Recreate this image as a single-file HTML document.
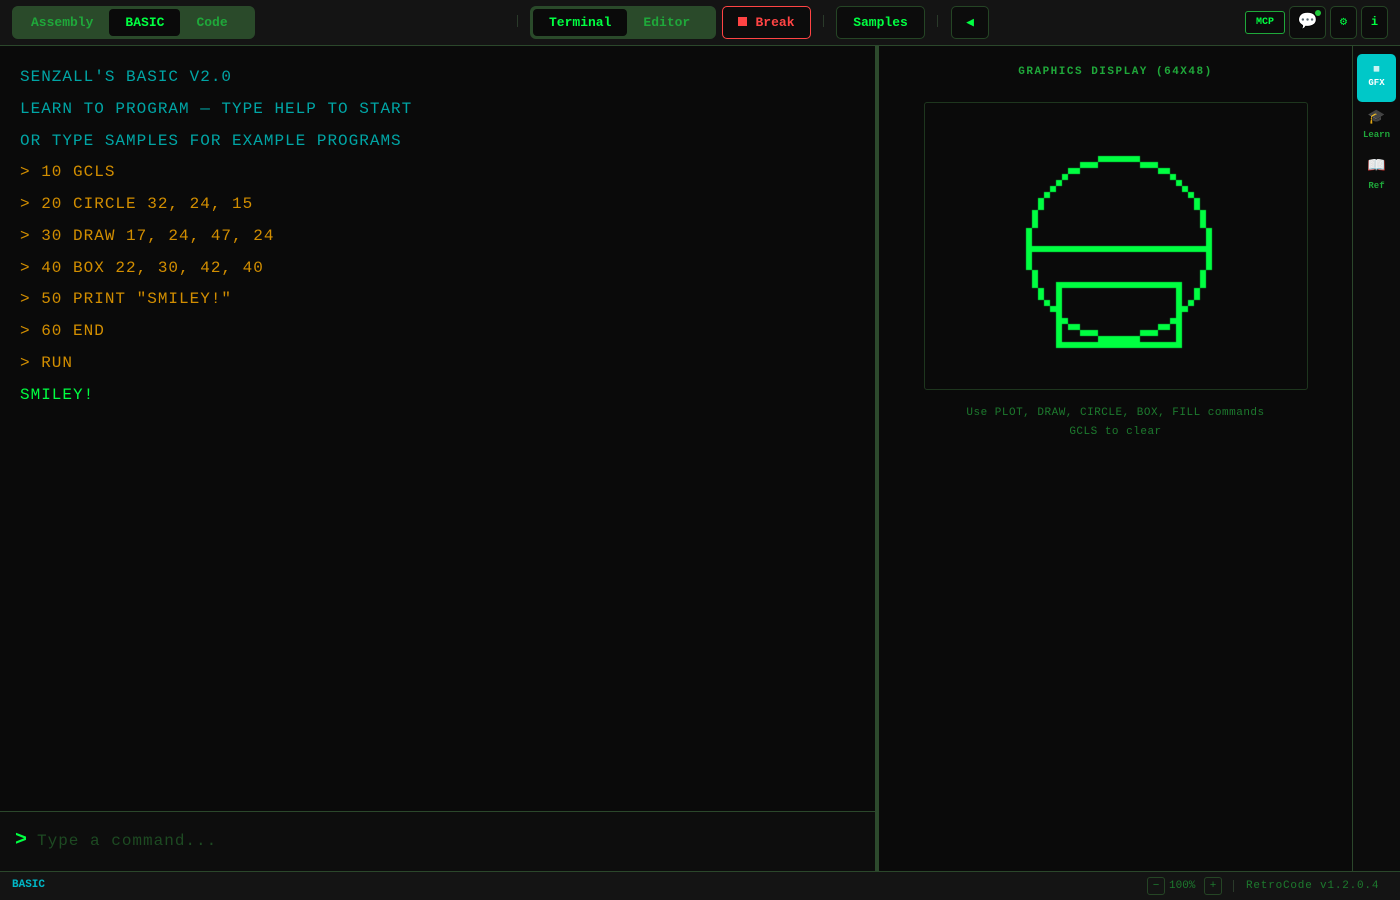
<!DOCTYPE html>
<html><head><meta charset="utf-8"><style>
*{box-sizing:border-box;margin:0;padding:0}
body{width:1400px;height:900px;background:#0a0a0a;font-family:"Courier New","Nimbus Mono PS","Nimbus Mono L",Courier,"Liberation Mono",monospace;overflow:hidden;position:relative}
.hdr{position:absolute;left:0;top:0;width:1400px;height:46px;background:#141414;border-bottom:1px solid #2b472b}
.grp{position:absolute;top:6px;height:33px;background:#2a4a2a;border-radius:6px;display:flex;padding:2px;border:1px solid #2a4a2a}
.grp div{padding:0 16px;line-height:27px;font-size:13px;font-weight:bold;color:#1fa83a;border-radius:4px}
.grp div.on{background:#0a0a0a;color:#00ff41}
.btn{position:absolute;top:6px;height:33px;border:1px solid #254525;border-radius:5px;background:#0c0c0c;color:#00ff41;font-size:13px;font-weight:bold;text-align:center;line-height:31px}
.sep{position:absolute;top:15px;width:1px;height:12px;background:#2a3a2a}
.t{position:absolute;left:20px;font-size:16px;letter-spacing:1px;white-space:pre}
.c{color:#00a5a5}.o{color:#d28e00}.g{color:#00ff41}
</style></head><body>
<div class="hdr">
<div class="grp" style="left:12px;width:243px"><div>Assembly</div><div class="on">BASIC</div><div>Code</div></div>
<div class="sep" style="left:517px"></div>
<div class="grp" style="left:530px;width:186px"><div class="on">Terminal</div><div>Editor</div></div>
<div class="btn" style="left:722px;width:89px;border-color:#ff4444;color:#ff4444"><span style="display:inline-block;width:9px;height:9px;background:#ff4444;margin-right:8px"></span>Break</div>
<div class="sep" style="left:823px"></div>
<div class="btn" style="left:836px;width:89px">Samples</div>
<div class="sep" style="left:937px"></div>
<div class="btn" style="left:951px;width:38px">◀</div>
<div class="btn" style="left:1245px;top:11px;height:23px;width:40px;line-height:21px;font-size:10px;border-color:#1fa83a;border-radius:3px">MCP</div>
<div class="btn" style="left:1289px;width:37px;font-size:16px">💬<span style="position:absolute;right:4px;top:3px;width:6px;height:6px;border-radius:50%;background:#1fc83a"></span></div>
<div class="btn" style="left:1330px;width:27px;font-size:12px">⚙</div>
<div class="btn" style="left:1361px;width:27px;font-size:12px">i</div>
</div>
<div class="t c" style="top:68px">SENZALL'S BASIC V2.0</div>
<div class="t c" style="top:100px">LEARN TO PROGRAM — TYPE HELP TO START</div>
<div class="t c" style="top:132px">OR TYPE SAMPLES FOR EXAMPLE PROGRAMS</div>
<div class="t o" style="top:163px">&gt; 10 GCLS</div>
<div class="t o" style="top:195px">&gt; 20 CIRCLE 32, 24, 15</div>
<div class="t o" style="top:227px">&gt; 30 DRAW 17, 24, 47, 24</div>
<div class="t o" style="top:259px">&gt; 40 BOX 22, 30, 42, 40</div>
<div class="t o" style="top:290px">&gt; 50 PRINT "SMILEY!"</div>
<div class="t o" style="top:322px">&gt; 60 END</div>
<div class="t o" style="top:354px">&gt; RUN</div>
<div class="t g" style="top:386px">SMILEY!</div>
<div style="position:absolute;left:0;top:811px;width:875px;height:60px;background:#0d0d0d;border-top:1px solid #2b472b"></div>
<div style="position:absolute;left:15px;top:829px;font-size:20px;font-weight:bold;color:#00ff41">&gt;</div>
<div class="t" style="left:37px;top:832px;color:#1d4a22">Type a command...</div>
<div style="position:absolute;left:875px;top:46px;width:4px;height:825px;background:#2d4a2d"></div>
<div style="position:absolute;left:1352px;top:46px;width:48px;height:825px;background:#0c0c0c;border-left:1px solid #2b472b"></div>
<div style="position:absolute;left:879px;top:66px;width:473px;text-align:center;font-size:11px;letter-spacing:1.5px;font-weight:bold;color:#1fa83a">GRAPHICS DISPLAY (64X48)</div>
<div style="position:absolute;left:924px;top:102px;width:384px;height:288px;border:1px solid #1e361e;border-radius:3px"></div>
<canvas id="cv" width="384" height="288" style="position:absolute;left:924px;top:102px"></canvas>
<div style="position:absolute;left:879px;top:404px;width:473px;text-align:center;font-size:11px;line-height:19px;letter-spacing:.5px;color:#1d7a2e">Use PLOT, DRAW, CIRCLE, BOX, FILL commands<br>GCLS to clear</div>
<div style="position:absolute;left:1357px;top:54px;width:39px;height:48px;background:#00c8c8;border-radius:5px;color:#fff;text-align:center;font-size:9px;font-weight:bold;padding-top:8px;line-height:14px">▦<br>GFX</div>
<div style="position:absolute;left:1355px;top:110px;width:43px;text-align:center;font-size:9px;font-weight:bold;color:#1fa83a;line-height:16px"><span style="font-size:14px">🎓</span><br>Learn</div>
<div style="position:absolute;left:1355px;top:158px;width:43px;text-align:center;font-size:9px;font-weight:bold;color:#1fa83a;line-height:18px"><span style="font-size:15px">📖</span><br>Ref</div>
<div style="position:absolute;left:0;top:871px;width:1400px;height:29px;background:#141414;border-top:1px solid #2b472b"></div>
<div style="position:absolute;left:12px;top:879px;font-size:11px;font-weight:bold;color:#00b8c8">BASIC</div>
<div style="position:absolute;left:1147px;top:877px;width:18px;height:18px;border:1px solid #254525;border-radius:3px;color:#1d7a2e;font-size:11px;text-align:center;line-height:16px">−</div>
<div style="position:absolute;left:1169px;top:880px;font-size:11px;color:#1d7a2e">100%</div>
<div style="position:absolute;left:1204px;top:877px;width:18px;height:18px;border:1px solid #254525;border-radius:3px;color:#1d7a2e;font-size:11px;text-align:center;line-height:16px">+</div>
<div style="position:absolute;left:1233px;top:880px;width:1px;height:12px;background:#2a3a2a"></div>
<div style="position:absolute;left:1246px;top:880px;font-size:11px;letter-spacing:.8px;color:#1d7a2e">RetroCode v1.2.0.4</div>
<script>
var c=document.getElementById('cv').getContext('2d');c.fillStyle='#00ff41';
function p(x,y){c.fillRect(x*6,y*6,6,6)}
function circ(cx,cy,r){var x=r,y=0,d=1-r;while(x>=y){[[x,y],[y,x],[-y,x],[-x,y],[-x,-y],[-y,-x],[y,-x],[x,-y]].forEach(function(a){p(cx+a[0],cy+a[1])});y++;if(d<0)d+=2*y+1;else{x--;d+=2*(y-x)+1}}}
circ(32,24,15);
for(var x=17;x<=47;x++)p(x,24);
for(x=22;x<=42;x++){p(x,30);p(x,40)}
for(var y=30;y<=40;y++){p(22,y);p(42,y)}
</script>
</body></html>
